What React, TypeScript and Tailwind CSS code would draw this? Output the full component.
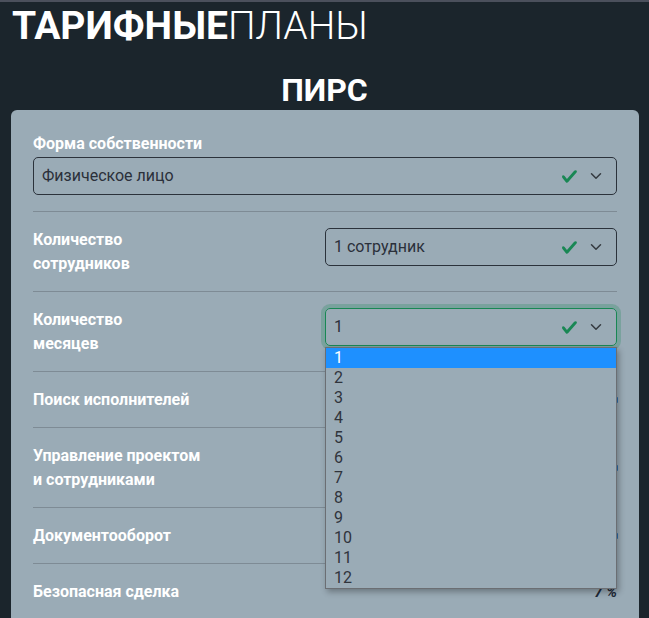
import React from "react";

const Check = () => (
  <svg width="17" height="17" viewBox="0 0 8 8" className="shrink-0">
    <path fill="#198754" d="M2.3 6.73.6 4.53c-.4-1.04.46-1.4 1.1-.8l1.1 1.4 3.4-3.8c.6-.63 1.6-.27 1.2.7l-4 4.6c-.43.5-.8.4-1.1.1z" />
  </svg>
);

const Chevron = () => (
  <svg width="12" height="12" viewBox="0 0 16 16" className="shrink-0">
    <path fill="none" stroke="#343a40" strokeWidth="2" strokeLinecap="round" strokeLinejoin="round" d="m2 5 6 6 6-6" />
  </svg>
);

function Select({ value, focused }: { value: string; focused?: boolean }) {
  return (
    <div
      className={
        "flex h-[38px] items-center rounded-[5px] border pl-2 pr-[14px] " +
        (focused ? "border-[#198754] ring-[4px] ring-[#198754]/25" : "border-[#2b323b]")
      }
    >
      <span className="flex-1 text-[16px] text-[#2b303a]">{value}</span>
      <Check />
      <span className="ml-[12px] flex">
        <Chevron />
      </span>
    </div>
  );
}

const Label = ({ children }: { children: React.ReactNode }) => (
  <div className="text-[16px] font-bold leading-[24px] text-white">{children}</div>
);

const Divider = () => <div className="h-px bg-[#7e8b95]" />;

const Peek = () => <div className="-mr-px h-[6px] w-[3px] rounded-[1px] bg-[#2f6fae]" />;

export default function App() {
  const months = Array.from({ length: 12 }, (_, i) => String(i + 1));
  return (
    <div
      className="h-[618px] overflow-hidden border-t-2 border-[#4b505c] bg-[#1b252c]"
      style={{ fontFamily: "Roboto, 'Noto Sans', sans-serif" }}
    >
      <h1 className="ml-[12px] mt-[4px] text-[39px] leading-[40px] text-white">
        <span className="font-bold">ТАРИФНЫЕ</span>
        <span className="font-light">ПЛАНЫ</span>
      </h1>
      <h2 className="mt-[26px] text-center text-[32px] font-bold leading-[36px] text-white">ПИРС</h2>
      <div className="ml-[11px] mr-[10px] mt-[2px] rounded-[6px] bg-[#9aabb6] px-[22px] pb-6">
        <div className="pb-[16px] pt-[22px]">
          <Label>Форма собственности</Label>
          <div className="mt-[1px]">
            <Select value="Физическое лицо" />
          </div>
        </div>
        <Divider />
        <div className="grid grid-cols-2 items-start pb-[15px] pt-[16px]">
          <Label>
            Количество
            <br />
            сотрудников
          </Label>
          <Select value="1 сотрудник" />
        </div>
        <Divider />
        <div className="relative grid grid-cols-2 items-start pb-[15px] pt-[16px]">
          <Label>
            Количество
            <br />
            месяцев
          </Label>
          <Select value="1" focused />
          <div className="absolute left-[292px] top-[55px] z-10 w-[292px] border border-[#6b6e73] bg-[#9aabb6] shadow-[2px_3px_6px_rgba(0,0,0,0.3)]">
            {months.map((m, i) => (
              <div
                key={m}
                className={
                  "h-[20px] pl-2 text-[16px] leading-[20px] " +
                  (i === 0 ? "bg-[#1e90ff] text-white" : "text-[#30343c]")
                }
              >
                {m}
              </div>
            ))}
          </div>
        </div>
        <Divider />
        <div className="flex items-center justify-between pb-[15px] pt-[16px]">
          <Label>Поиск исполнителей</Label>
          <Peek />
        </div>
        <Divider />
        <div className="flex items-center justify-between pb-[15px] pt-[16px]">
          <Label>
            Управление проектом
            <br />и сотрудниками
          </Label>
          <Peek />
        </div>
        <Divider />
        <div className="flex items-center justify-between pb-[15px] pt-[16px]">
          <Label>Документооборот</Label>
          <Peek />
        </div>
        <Divider />
        <div className="flex items-center justify-between pb-[15px] pt-[16px]">
          <Label>Безопасная сделка</Label>
          <span className="text-[15px] font-bold italic text-[#1f2937]">7 %</span>
        </div>
      </div>
    </div>
  );
}
